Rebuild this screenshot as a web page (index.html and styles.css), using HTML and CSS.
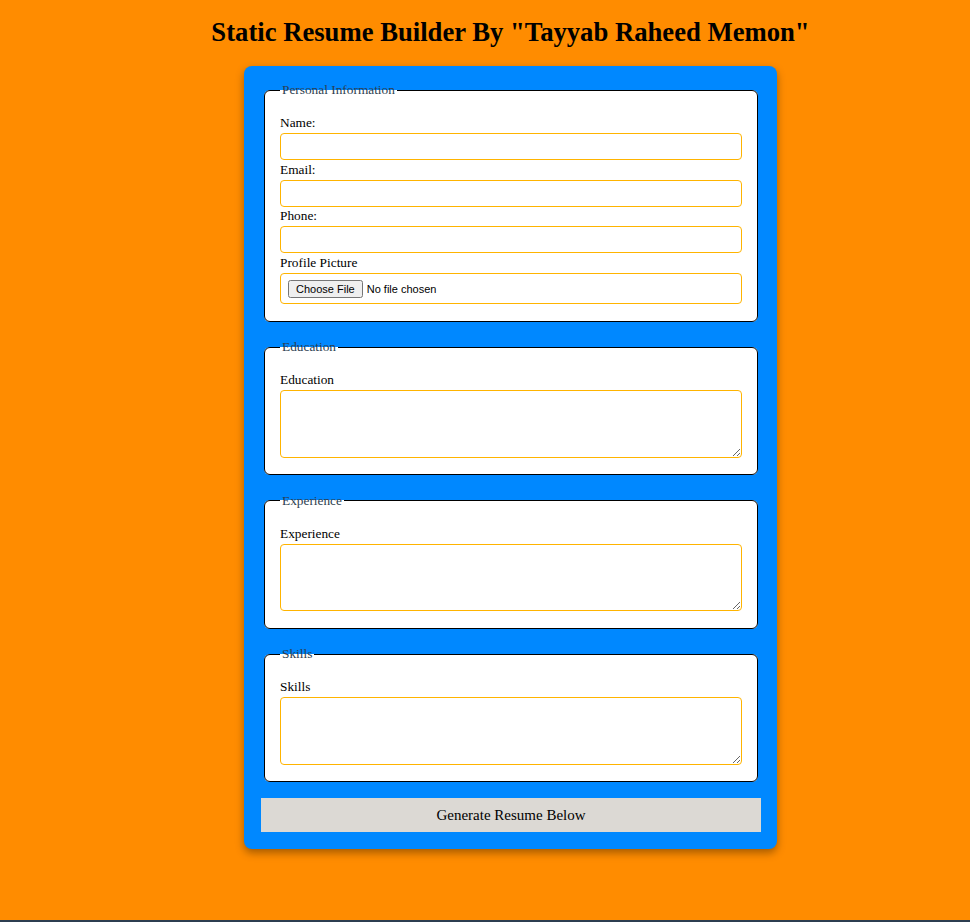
FILE: index.html
```html
<!DOCTYPE html>
<html>
<head>
<meta charset="utf-8">
<title>Static Resume Builder</title>
<link rel="stylesheet" href="styles.css">
</head>
<body>
<div class="page">
  <h1 class="title">Static Resume Builder By "Tayyab Raheed Memon"</h1>
  <form class="builder">
    <fieldset class="group">
      <legend class="group-legend">Personal Information</legend>
      <label class="field-label" for="name">Name:</label>
      <input class="field-input" type="text" id="name">
      <label class="field-label" for="email">Email:</label>
      <input class="field-input" type="email" id="email">
      <label class="field-label" for="phone">Phone:</label>
      <input class="field-input" type="tel" id="phone">
      <label class="field-label" for="pic">Profile Picture</label>
      <input class="field-input file-input" type="file" id="pic">
    </fieldset>
    <fieldset class="group">
      <legend class="group-legend">Education</legend>
      <label class="field-label" for="edu">Education</label>
      <textarea class="field-area" id="edu"></textarea>
    </fieldset>
    <fieldset class="group">
      <legend class="group-legend">Experience</legend>
      <label class="field-label" for="exp">Experience</label>
      <textarea class="field-area" id="exp"></textarea>
    </fieldset>
    <fieldset class="group">
      <legend class="group-legend">Skills</legend>
      <label class="field-label" for="skills">Skills</label>
      <textarea class="field-area" id="skills"></textarea>
    </fieldset>
    <button class="generate" type="button">Generate Resume Below</button>
  </form>
  <div class="output"></div>
</div>
</body>
</html>
```
FILE: styles.css
```css
html, body {
  margin: 0;
  padding: 0;
}
body {
  background: #ff8c00;
  font-family: "Liberation Serif", "Times New Roman", serif;
  color: #000;
}
.page {
  padding: 16px 0 0 51px;
  display: flex;
  flex-direction: column;
  align-items: center;
}
.title {
  margin: 0 0 18px;
  font-size: 26.67px;
  font-weight: bold;
  line-height: 32px;
  text-align: center;
}
.builder {
  width: 500px;
  padding: 16px 16px 17px 17px;
  background: #0088ff;
  border-radius: 8px;
  box-shadow: 0 4px 8px rgba(0, 0, 0, 0.35);
  display: flex;
  flex-direction: column;
}
.group {
  margin: 0 3px 17.5px;
  padding: 17px 15px 15px;
  border: 1px solid #000;
  border-radius: 6px;
  background: #fff;
  min-width: 0;
}
.group-legend {
  color: #2c3e50;
  font-size: 13.33px;
  padding: 0 2px;
}
.field-label {
  display: block;
  font-size: 13.33px;
  line-height: 15px;
  margin-bottom: 3px;
}
.field-input {
  display: block;
  box-sizing: border-box;
  width: 100%;
  margin: 0 0 1.67px;
  padding: 5px;
  border: 1px solid #ffb400;
  border-radius: 4px;
  font-family: "Liberation Sans", Arial, sans-serif;
  font-size: 13.33px;
  line-height: 15px;
  background: #fff;
}
.file-input {
  height: 31px;
  padding: 6px 7px;
  font-size: 11px;
  line-height: 13px;
}
.field-area {
  display: block;
  box-sizing: border-box;
  width: 100%;
  height: 67.6px;
  margin: 0 0 1.5px;
  padding: 5px;
  border: 1px solid #ffb400;
  border-radius: 4px;
  background: #fff;
}
.generate {
  margin-top: -1.5px;
  width: 500px;
  height: 34px;
  border: none;
  background: #dcd9d4;
  font-family: "Liberation Serif", "Times New Roman", serif;
  font-size: 15px;
  color: #000;
}
.output {
  align-self: stretch;
  margin: 71px 0 0 -51px;
  border-top: 2px solid #2c3e50;
  height: 0;
}
```
